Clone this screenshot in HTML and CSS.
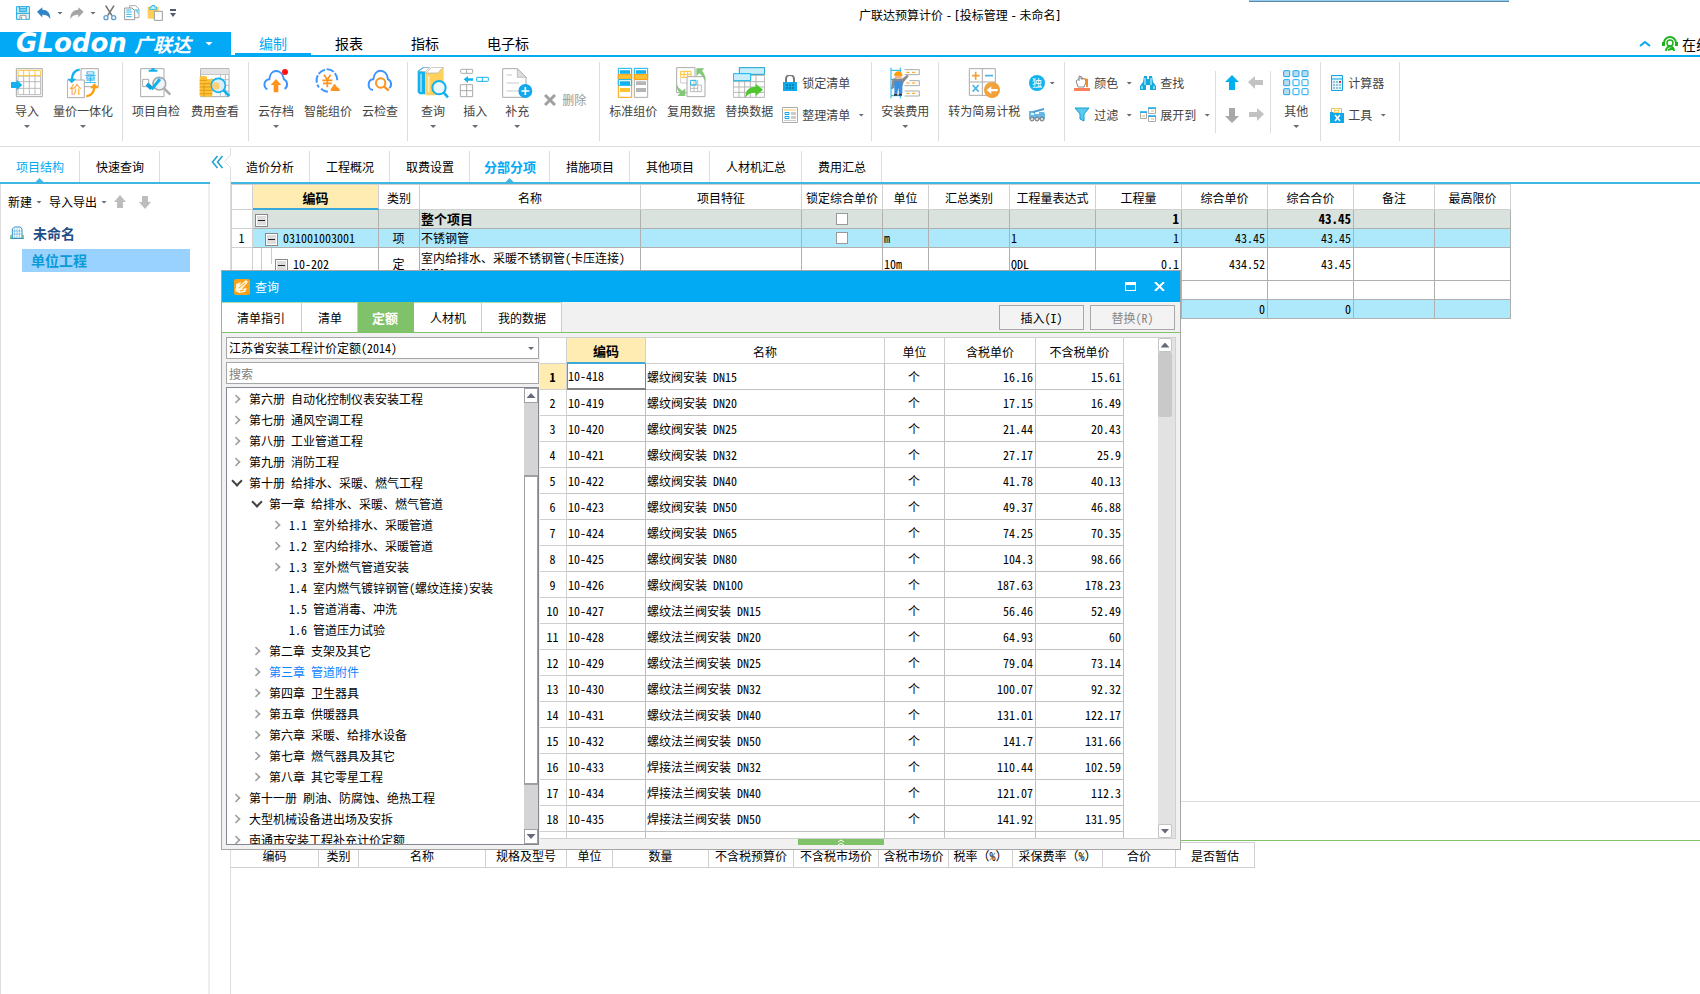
FILE: index.html
```html
<!DOCTYPE html>
<html lang="zh-CN">
<head>
<meta charset="utf-8">
<title>广联达预算计价 - [投标管理 - 未命名]</title>
<link rel="stylesheet" href="styles.css">
</head>
<body>
<div class="app">
<header class="titlebar">
  <div class="quick">
    <button aria-label="保存"><svg width="14" height="14" viewBox="48 18 42 42"><path d="M50 20h38v38H50z" fill="#e4f6fd" stroke="#14a5dd" stroke-width="3"/><path d="M58 20v15h22V20M60 25h18M60 30h18" fill="none" stroke="#14a5dd" stroke-width="3"/><path d="M50 40h38" stroke="#14a5dd" stroke-width="3"/><path d="M60 58V46h18v12M65 50v8" fill="#fff" stroke="#999" stroke-width="3"/></svg></button>
    <button aria-label="撤销" class="has-caret"><svg width="14" height="13" viewBox="114 16 42 38"><path d="M114 30l16-14v8c14 0 24 8 24 28-6-10-12-13-24-13v8z" fill="#2e86c8"/></svg><i class="caret"></i></button>
    <button aria-label="重做" class="has-caret"><svg width="14" height="13" viewBox="211 16 42 38"><path d="M252 30l-16-14v8c-14 0-24 8-24 28 6-10 12-13 24-13v8z" fill="#a5a5a5"/></svg><i class="caret"></i></button>
    <button aria-label="剪切"><svg width="14" height="16" viewBox="305 15 42 48"><path d="M313 17l19 30M338 17l-19 30" stroke="#777" stroke-width="5"/><circle cx="314" cy="53" r="6" fill="none" stroke="#5f9ccc" stroke-width="4"/><circle cx="337" cy="53" r="6" fill="none" stroke="#5f9ccc" stroke-width="4"/></svg></button>
    <button aria-label="复制"><svg width="16" height="16" viewBox="374 15 48 48"><path d="M391 24v-7h18l10 10v26h-14" fill="#fff" stroke="#aaa" stroke-width="3"/><path d="M376 24h22l8 8v27h-30z" fill="#fff" stroke="#999" stroke-width="3"/><path d="M381 30h14M381 36h16M381 43h16M381 50h16" stroke="#29b6ea" stroke-width="3"/><path d="M404 27h14v18z" fill="#7fd4f2"/></svg></button>
    <button aria-label="粘贴"><svg width="16" height="16" viewBox="442 15 48 48"><path d="M444 20h33v36h-33z" fill="#ffcf5a"/><path d="M451 28v-7h6v-5h7v5h6v7z" fill="#dff5fd" stroke="#29b6ea" stroke-width="3"/><path d="M464 34h24v27h-24z" fill="#fff" stroke="#999" stroke-width="3"/></svg></button>
    <button aria-label="自定义"><svg width="6" height="8" viewBox="0 0 6 8"><path d="M0 0h6v2H0zM0 4h6L3 8z" fill="#555a6e"/></svg></button>
  </div>
  <div class="window-title">广联达预算计价 - [投标管理 - 未命名]</div>
  <div class="drag-tab"></div>
</header>
<nav class="menubar">
  <button class="brand"><span class="brand-en">GLodon</span><span class="brand-cn">广联达</span><i class="caret caret-white"></i></button>
  <a href="#" class="menu active">编制</a><a href="#" class="menu">报表</a><a href="#" class="menu">指标</a><a href="#" class="menu wide">电子标</a>
  <div class="menu-end">
    <svg width="12" height="7" viewBox="0 0 12 7"><path d="M1 6l5-4 5 4" fill="none" stroke="#0aa6ee" stroke-width="2"/></svg>
    <svg width="16" height="16" viewBox="0 0 16 16" fill="none" stroke="#1db31d"><path d="M2 10V7a6 6 0 0 1 12 0v3" stroke-width="2"/><circle cx="8" cy="7" r="3" stroke-width="1.5"/><path d="M1 6v4M15 6v4" stroke-width="2"/><path d="M4 15c0-6 8-6 8 0M6 14l6-2" stroke-width="2"/></svg>
    <span>在线</span>
  </div>
</nav>

<div class="ribbon">
  <div class="group g-first">
    <button class="big"><svg width="32" height="32" viewBox="33 201 96 96"><path d="M49 206h78v84H49z" fill="#fff" stroke="#aaa" stroke-width="3"/><path d="M54 228h68v56H54zM54 245h68M54 265h68M71 228v56M88 228v56M105 228v56" fill="none" stroke="#bbb" stroke-width="3"/><path d="M54 211h68v16H54zM71 211v16M88 211v16M105 211v16" fill="none" stroke="#ffc53d" stroke-width="3"/><path d="M33 246h17v-7l17 16-17 16v-7H33z" fill="#12b2ee"/></svg><span>导入</span><i class="caret"></i></button>
    <button class="big"><svg width="32" height="32" viewBox="201 201 96 96"><path d="M243 206h52v54h-52z" fill="#fff" stroke="#aaa" stroke-width="3"/><path d="M202 240h51v53h-51z" fill="#fff" stroke="#aaa" stroke-width="3"/><text x="253" y="246" font-size="36" fill="#12b2ee" font-family="Noto Sans CJK SC">量</text><text x="209" y="281" font-size="36" fill="#ff9d0a" font-family="Noto Sans CJK SC">价</text><path d="M239 209c-16 2-22 12-23 28" fill="none" stroke="#12b2ee" stroke-width="7"/><path d="M202 236h27l-14 14z" fill="#12b2ee"/><path d="M259 289c18-3 23-13 24-27" fill="none" stroke="#ff9d0a" stroke-width="7"/><path d="M270 265h27l-14-15z" fill="#ff9d0a"/></svg><span>量价一体化</span><i class="caret"></i></button>
  </div>
  <div class="group g-check">
    <button class="big"><svg width="32" height="32" viewBox="419 201 96 96"><path d="M421 206h70v84h-70z" fill="#fff" stroke="#aaa" stroke-width="3"/><path d="M445 215v-6h7c2-7 10-7 12 0h7v6z" fill="#12b2ee"/><path d="M427 238h18v22h-18z" fill="none" stroke="#aaa" stroke-width="3"/><circle cx="477" cy="251" r="19" fill="#eef5fa" stroke="#aaa" stroke-width="5"/><path d="M492 266l18 18" stroke="#aaa" stroke-width="7"/><path d="M440 252l14 14" stroke="#0f9edb" stroke-width="12"/><path d="M454 268l25-31" stroke="#12b2ee" stroke-width="9"/></svg><span>项目自检</span></button>
    <button class="big"><svg width="32" height="32" viewBox="596 201 96 96"><path d="M601 206h85v84h-85z" fill="#fff" stroke="#aaa" stroke-width="3"/><path d="M602 208h83v13h-83z" fill="#e3e3e3"/><path d="M601 223h85M601 239h85M601 256h85M601 273h85M660 223v67M675 223v67" stroke="#bbb" stroke-width="3"/><path d="M598 230l11-3 11 3v10l16-5v53l-14 3-24-4z" fill="#ffc233"/><path d="M598 241h22M598 251h38M598 261h38M598 271h38M598 281h38M611 253v36" stroke="#e09a18" stroke-width="3"/><circle cx="654" cy="256" r="21" fill="#d9f0fa" stroke="#12b2ee" stroke-width="5"/><circle cx="647" cy="258" r="11" fill="#ffcf76"/><path d="M669 270l18 18" stroke="#12b2ee" stroke-width="8"/></svg><span>费用查看</span></button>
  </div>
  <div class="group g-cloud">
    <button class="big"><svg width="32" height="32" viewBox="780 195 96 96"><path d="M802 262c-14-8-10-29 6-30 2-33 38-33 44 0 12 5 12 23 2 29" fill="none" stroke="#3f95ff" stroke-width="6"/><path d="M828 231l16 18h-9v22h-14v-22h-9z" fill="#ff931e"/><circle cx="855" cy="210" r="9" fill="#f11"/></svg><span>云存档</span><i class="caret"></i></button>
    <button class="big"><svg width="32" height="32" viewBox="936 195 96 96"><path d="M975 203a33 33 0 0 0-18 53M980 202c20 0 31 14 32 33M963 260c7 6 13 9 21 9" fill="none" stroke="#3f95ff" stroke-width="6" stroke-dasharray="23 5"/><path d="M972 218l10 15 10-15M982 231v25M967 235h30M969 244h26" fill="none" stroke="#ff931e" stroke-width="5"/><path d="M992 267c0-11 7-10 9-20h5c2 10 14 10 14 20z" fill="#ff931e"/></svg><span>智能组价</span></button>
    <button class="big"><svg width="32" height="32" viewBox="1092 195 96 96"><path d="M1119 264c-18-1-17-31 1-32 3-35 41-34 44 0 11 4 12 20 4 26" fill="none" stroke="#3f95ff" stroke-width="6"/><circle cx="1142" cy="243" r="14" fill="none" stroke="#ff931e" stroke-width="6"/><path d="M1152 253l14 13" stroke="#ff931e" stroke-width="7"/></svg><span>云检查</span></button>
  </div>
  <div class="group g-query">
    <button class="big"><svg width="32" height="32" viewBox="52 201 96 96"><path d="M54 213l15-11h20l-12 11v70H60l-6-6z" fill="#12b2ee"/><path d="M64 221v55" stroke="#bfeafa" stroke-width="4"/><path d="M78 219l19-17h35v74l-26 10H78z" fill="#ffd05c"/><path d="M79 219l17-17h35l-17 17zM58 214l14-11h18l-13 12z" fill="#fff" stroke="#aaa" stroke-width="2"/><path d="M87 227v50" stroke="#fff0c0" stroke-width="5"/><circle cx="118" cy="263" r="20" fill="#edf7fb" stroke="#12b2ee" stroke-width="6"/><path d="M132 278l13 14" stroke="#12b2ee" stroke-width="8"/></svg><span>查询</span><i class="caret"></i></button>
    <button class="big"><svg width="32" height="32" viewBox="180 201 96 96"><rect x="185" y="208" width="36" height="12" rx="2" fill="none" stroke="#aaa" stroke-width="3"/><path d="M203 208v12M184 254h37v36h-37zM184 272h37M203 254v36" fill="none" stroke="#aaa" stroke-width="3"/><path d="M194 238l13-10v7h15v7h-15v7z" fill="#12b2ee"/><rect x="233" y="232" width="35" height="12" rx="2" fill="none" stroke="#12b2ee" stroke-width="3"/><path d="M250 232v12" stroke="#12b2ee" stroke-width="3"/></svg><span>插入</span><i class="caret"></i></button>
    <button class="big"><svg width="32" height="32" viewBox="302 201 96 96"><path d="M307 206h44l26 26v60h-70z" fill="#fff" stroke="#aaa" stroke-width="3"/><path d="M351 206v26h26z" fill="#ddd" stroke="#aaa" stroke-width="2"/><path d="M318 225h17M318 249h38M318 273h36" stroke="#ddd" stroke-width="5"/><circle cx="375" cy="273" r="21" fill="#12a8ee"/><path d="M363 273h24M375 261v24" stroke="#fff" stroke-width="5"/></svg><span>补充</span><i class="caret"></i></button>
    <button class="small disabled" disabled><svg width="12" height="12" viewBox="0 0 12 12"><path d="M1 1l10 10M11 1L1 11" stroke="#a0a0a0" stroke-width="3"/></svg><span>删除</span></button>
  </div>
  <div class="group g-data">
    <button class="big"><svg width="32" height="32" viewBox="651 201 96 96"><g fill="#fff" stroke-width="3"><path d="M655 205h40v32h-40z" stroke="#12b2ee"/><path d="M703 205h40v32h-40z" stroke="#12b2ee"/><path d="M655 239h40v53h-40z" stroke="#ff9d0a"/><path d="M703 239h40v53h-40z" stroke="#aaa"/><path d="M655 223h40v15h-40zM703 223h40v15h-40z" fill="#ffc233" stroke="#ff9d0a"/><path d="M655 239h40v17h-40z" stroke="#12b2ee"/></g><path d="M660 211h30v10h-30zM708 211h30v10h-30zM660 244h30v11h-30z" fill="#12b2ee"/><path d="M660 264h30v12h-30z" fill="#ffc233"/><path d="M708 244h30v11h-30zM708 264h30v12h-30z" fill="#b5b5b5"/></svg><span>标准组价</span></button>
    <button class="big"><svg width="32" height="32" viewBox="821 201 96 96"><path d="M826 203h55v75h-55z" fill="#fff" stroke="#aaa" stroke-width="3"/><path d="M838 214h31v18h-31zM848 214v18M859 214v18M838 223h31" fill="none" stroke="#ffc233" stroke-width="3"/><path d="M838 235v14h20" fill="none" stroke="#ccc" stroke-width="3"/><path d="M857 230h54v60h-54z" fill="#fff" stroke="#aaa" stroke-width="3"/><path d="M867 255h33v20h-33zM878 240v35M889 240v35M889 265h-22" fill="none" stroke="#bbb" stroke-width="3"/><path d="M868 241h16v14h-16z" fill="none" stroke="#12b2ee" stroke-width="3"/><path d="M885 205h24l-7 7c9 9 10 22 10 34-5-14-10-19-18-26l-9 9z" fill="#85c77a"/><path d="M852 288h-24l8-8c-8-8-11-18-11-30 4 11 9 17 18 22l9-7z" fill="#85c77a"/></svg><span>复用数据</span></button>
    <button class="big"><svg width="32" height="32" viewBox="999 201 96 96"><path d="M1000 226h94v66h-94zM1000 245h94M1000 261h94M1000 277h94M1017 226v66M1034 226v66M1051 226v66M1068 226v66" fill="#fff" stroke="#b5b5b5" stroke-width="3"/><path d="M1018 203h76v20h-76z" fill="#c8eefb" stroke="#12a0cc" stroke-width="3"/><path d="M1000 221h52v21h-52z" fill="#c8eefb" stroke="#12b2ee" stroke-width="3"/><path d="M1036 293c0-25 14-33 31-33v-9l22 18-22 19v-10c-15 0-23 3-31 15z" fill="#4fc52e"/></svg><span>替换数据</span></button>
    <div class="stack">
      <button class="small"><svg width="16" height="16" viewBox="0 0 16 16"><path d="M4 7V4a4 4 0 0 1 8 0v3" fill="none" stroke="#777" stroke-width="2"/><path d="M1 7h14v9H1z" fill="#12a8ee"/><path d="M4 10h8M4 13h8" stroke="#066" stroke-dasharray="2 1"/></svg><span>锁定清单</span></button>
      <button class="small"><svg width="16" height="16" viewBox="0 0 16 16"><path d="M.5.5h15v15H.5z" fill="#fff" stroke="#aaa"/><path d="M2 3h12" stroke="#ffe3ad" stroke-width="2"/><path d="M3 5.500h4v2H3zM3 9.500h4v2H3z" fill="#fff" stroke="#12a8ee"/><path d="M9 5h5v3H9zM9 9h5v3H9zM2 13h12v1H2z" fill="#ccc"/></svg><span>整理清单</span><i class="caret"></i></button>
    </div>
  </div>
  <div class="group">
    <button class="big"><svg width="32" height="32" viewBox="91 203 96 96"><path d="M97 205v92M125 205v92M97 213h28M97 240h28M97 264h28M97 289h28" stroke="#12b2ee" stroke-width="3"/><path d="M138 211h44v15h-44M152 244h30v15h-44M138 275h44v15h-44" fill="none" stroke="#aaa" stroke-width="3"/><path d="M143 219h10M160 219h10M143 251h10M160 251h10M143 282h10M160 282h10" stroke="#ff9d0a" stroke-width="3"/><path d="M101 240l9-5 6 5 14-2 16-12 4 5-15 18-4 12h-25l-3 9-5-1z" fill="#8b8b8b"/><path d="M107 246h24v37h-10l-2-18-3 18h-9z" fill="#3a8fe0"/><path d="M109 226h20v12h-20z" fill="#efb389"/><path d="M106 229c0-18 26-18 26 0z" fill="#ff9d0a"/><path d="M106 283h10v6h-10zM120 283h10v6h-10z" fill="#333"/></svg><span>安装费用</span><i class="caret"></i></button>
  </div>
  <div class="group g-tax">
    <button class="big"><svg width="32" height="32" viewBox="327 203 96 96"><path d="M331 208h78v80h-78zM370 208v80M331 248h78" fill="#fff" stroke="#aaa" stroke-width="3"/><path d="M339 229h23M350 217v24" stroke="#f2a035" stroke-width="5"/><path d="M378 229h24M341 257l18 20M359 257l-18 20" stroke="#4fb5e4" stroke-width="5"/><circle cx="399" cy="272" r="24" fill="#f2a23a"/><path d="M383 272l14-11v8h19v7h-19v8z" fill="#fff"/></svg><span>转为简易计税</span></button>
    <div class="stack">
      <button class="small tight"><svg width="16" height="16" viewBox="0 0 16 16"><circle cx="8" cy="8" r="8" fill="#12b2ee"/><text x="3" y="12" font-size="10" fill="#fff" font-family="Noto Sans CJK SC">独</text></svg><i class="caret"></i></button>
      <button class="small" aria-label="车辆"><svg width="16" height="14" viewBox="0 0 16 14"><path d="M0 3h6v3h4V4h5l1 2v5H0z" fill="#68b7e4"/><path d="M4 4L15 1" stroke="#4f9fd6" stroke-width="2"/><path d="M2 5h3v2H2z" fill="#dff1fb"/><g fill="#ddd" stroke="#6a7178" stroke-width="1"><circle cx="3" cy="11" r="2"/><circle cx="8" cy="11" r="2"/><circle cx="13" cy="11" r="2"/></g></svg></button>
    </div>
  </div>
  <div class="group g-tools">
    <div class="pairs">
      <button class="small"><svg width="16" height="16" viewBox="0 0 16 16"><path d="M0 13h16v3H0z" fill="#ff8058"/><path d="M2 6l4-3 5 1 1 3-2 5H4z" fill="#fff" stroke="#888"/><path d="M5 6V1l3 1v3" fill="none" stroke="#888"/><path d="M10 3l4 1v8h-2V7z" fill="#ed8b25"/></svg><span>颜色</span><i class="caret"></i></button>
      <button class="small"><svg width="16" height="16" viewBox="0 0 16 16"><path d="M4 1h3v3h2V1h3l1 6 3 4v4h-6v-5H6v5H0v-4l3-4z" fill="#16a7dc"/><path d="M5 3v7M11 3v7M2 11v3M14 11v3" stroke="#9ae3f5" stroke-width="1.500"/></svg><span>查找</span></button>
      <button class="small"><svg width="16" height="16" viewBox="0 0 16 16"><path d="M1 1h14l-5 6v7l-4-2V7z" fill="#5cc9f0" stroke="#159ed2"/></svg><span>过滤</span><i class="caret"></i></button>
      <button class="small"><svg width="16" height="16" viewBox="0 0 16 16"><path d="M.500 5.500h6v6h-6zM8.500 1.500h7v5h-7zM8.500 9.500h7v5h-7z" fill="#fff" stroke="#aaa"/><path d="M0 5h7M8 1h8M8 9h8" stroke="#12a8ee" stroke-width="1.500"/><path d="M2 9h3M11 4h3M11 12h3" stroke="#e1b36a"/></svg><span>展开到</span><i class="caret"></i></button>
    </div>
    <div class="arrows">
      <svg width="16" height="16" viewBox="0 0 16 16" fill="#00b0f0"><path d="M8 0l7 7h-4v8H5V7H1z"/></svg><svg width="16" height="16" viewBox="0 0 16 16" fill="#c2c2c2"><path d="M0 7l7-6v4h8v5H7v4z"/></svg>
      <svg width="16" height="16" viewBox="0 0 16 16" fill="#a8a8a8"><path d="M8 16l7-7h-4V1H5v8H1z"/></svg><svg width="16" height="16" viewBox="0 0 16 16" fill="#c2c2c2"><path d="M16 7L9 1v4H1v5h8v4z"/></svg>
    </div>
    <button class="big"><svg width="32" height="32" viewBox="62 203 96 96"><g fill="#b9dcef" stroke="#12a8ee" stroke-width="3"><rect x="73" y="214" width="18" height="18" rx="2"/><rect x="101" y="214" width="18" height="18" rx="2"/><rect x="128" y="214" width="18" height="18" rx="2"/><rect x="73" y="241" width="18" height="18" rx="2"/><rect x="73" y="268" width="18" height="18" rx="2"/><g fill="#fff"><rect x="101" y="241" width="18" height="18" rx="2"/><rect x="128" y="241" width="18" height="18" rx="2"/><rect x="101" y="268" width="18" height="18" rx="2"/><rect x="128" y="268" width="18" height="18" rx="2"/></g></g></svg><span>其他</span><i class="caret"></i></button>
  </div>
  <div class="group g-calc">
    <div class="stack">
      <button class="small"><svg width="14" height="16" viewBox="0 0 14 16"><path d="M1.500.500h11v15h-11z" fill="#e4f6fd" stroke="#14a5dd"/><path d="M1 4h12" stroke="#14a5dd"/><path d="M3 7h6M3 10h8M3 13h8" stroke="#4a93b8" stroke-dasharray="2 1"/><path d="M9 7h2" stroke="#e33" stroke-width="2"/></svg><span>计算器</span></button>
      <button class="small"><svg width="14" height="16" viewBox="0 0 14 16"><path d="M1.500 1.500h10v6h-10z" fill="#fff" stroke="#bbb"/><path d="M4 1h5v5H4z" fill="#ffd15f"/><path d="M5 2.500h3M5 4.500h3" stroke="#fff"/><path d="M0 5h3l1 1h10v10H0z" fill="#14a8e8"/><path d="M5 8l5 6M10 8l-5 6" stroke="#fff" stroke-width="1.500"/></svg><span>工具</span><i class="caret"></i></button>
    </div>
  </div>
</div>

<main class="workspace">
  <aside class="sidebar">
    <div class="tabs side-tabs"><button class="tab active plain">项目结构</button><button class="tab">快速查询</button></div>
    <div class="side-body">
      <div class="side-tools"><button>新建<i class="caret"></i></button><button>导入导出<i class="caret"></i></button>
        <svg width="12" height="14" viewBox="0 0 12 14"><path d="M6 0l6 7H9v6H3V7H0z" fill="#bdbdbd"/></svg><svg width="12" height="14" viewBox="0 0 12 14"><path d="M6 14l6-7H9V1H3v6H0z" fill="#bdbdbd"/></svg></div>
      <div class="project"><svg width="14" height="14" viewBox="30 681 42 42"><path d="M37 690l6-6h18l5 6v28H37z" fill="#fff" stroke="#2d8fc9" stroke-width="3"/><path d="M44 688v27M51 688v27M58 688v27M38 696h28M38 705h28" stroke="#5fb0dc" stroke-width="2"/><path d="M30 718h42" stroke="#2d8fc9" stroke-width="3"/><path d="M33 708v11M69 708v11" stroke="#5db565" stroke-width="4"/></svg><span>未命名</span></div>
      <div class="unit">单位工程</div>
    </div>
  </aside>
  <button class="gutter" aria-label="收起"><svg width="21" height="37" viewBox="-1 0 21 37" fill="none"><path d="M6.500 9L1.500 15l5 6M11.500 9l-5 6 5 6" stroke="#1ba2d0" stroke-width="1.500"/><path d="M19.500 1v7l-6 6.500 6 6V37" stroke="#ddd"/></svg></button>
  <section class="content">
    <div class="tabs"><button class="tab">造价分析</button><button class="tab">工程概况</button><button class="tab">取费设置</button><button class="tab active">分部分项</button><button class="tab">措施项目</button><button class="tab">其他项目</button><button class="tab">人材机汇总</button><button class="tab">费用汇总</button></div>
    <div class="upper">
      <table class="grid bill">
        <colgroup><col style="width:21px"><col style="width:126px"><col style="width:41px"><col style="width:221px"><col style="width:161px"><col style="width:81px"><col style="width:46px"><col style="width:81px"><col style="width:86px"><col style="width:86px"><col style="width:86px"><col style="width:86px"><col style="width:81px"><col style="width:76px"></colgroup>
        <thead><tr><th></th><th class="picked">编码</th><th>类别</th><th>名称</th><th>项目特征</th><th>锁定综合单价</th><th>单位</th><th>汇总类别</th><th>工程量表达式</th><th>工程量</th><th>综合单价</th><th>综合合价</th><th>备注</th><th>最高限价</th></tr></thead>
        <tbody>
          <tr class="total"><td class="no"></td><td class="lv0"><button class="minus" aria-label="折叠"></button></td><td></td><td>整个项目</td><td></td><td class="mid"><input type="checkbox" aria-label="锁定综合单价"></td><td></td><td></td><td></td><td class="num">1</td><td></td><td class="num">43.45</td><td></td><td></td></tr>
          <tr class="sel"><td class="no">1</td><td class="lv1"><button class="minus" aria-label="折叠"></button>031001003001</td><td class="mid">项</td><td>不锈钢管</td><td></td><td class="mid"><input type="checkbox" aria-label="锁定综合单价"></td><td>m</td><td></td><td>1</td><td class="num">1</td><td class="num">43.45</td><td class="num">43.45</td><td></td><td></td></tr>
          <tr class="tall"><td class="no"></td><td class="lv2"><button class="minus" aria-label="折叠"></button>10-202</td><td class="mid">定</td><td><div class="wrap">室内给排水、采暖不锈钢管(卡压连接) DN50</div></td><td></td><td></td><td>10m</td><td></td><td>QDL</td><td class="num">0.1</td><td class="num">434.52</td><td class="num">43.45</td><td></td><td></td></tr>
          <tr><td class="no"></td><td></td><td></td><td></td><td></td><td></td><td></td><td></td><td></td><td></td><td></td><td></td><td></td><td></td></tr>
          <tr class="sel"><td class="no"></td><td></td><td></td><td></td><td></td><td></td><td></td><td></td><td></td><td></td><td class="num">0</td><td class="num">0</td><td></td><td></td></tr>
        </tbody>
      </table>
    </div>
    <div class="splitter"></div>
    <div class="lower">
      <table class="grid detail">
        <colgroup><col style="width:88px"><col style="width:40px"><col style="width:127px"><col style="width:81px"><col style="width:46px"><col style="width:96px"><col style="width:85px"><col style="width:85px"><col style="width:70px"><col style="width:64px"><col style="width:90px"><col style="width:73px"><col style="width:79px"></colgroup>
        <thead><tr><th>编码</th><th>类别</th><th>名称</th><th>规格及型号</th><th>单位</th><th>数量</th><th>不含税预算价</th><th>不含税市场价</th><th>含税市场价</th><th>税率（%）</th><th>采保费率（%）</th><th>合价</th><th>是否暂估</th></tr></thead>
      </table>
    </div>
  </section>
</main>

<div class="dialog" role="dialog" aria-label="查询">
  <div class="dialog-title">
    <svg width="16" height="16" viewBox="0 0 16 16"><rect width="16" height="16" rx="2" fill="#f9a11b"/><path d="M2 5l5-2-1 3 6-5 2 2-6 7 5-1-2 4-6 1-4-2 1-4z" fill="#fff3d4"/><path d="M5 9l6-5M6 12l4-1" stroke="#f9a11b"/></svg>
    <span>查询</span>
    <div class="dialog-ctl"><button aria-label="最大化"><svg width="11" height="9" viewBox="0 0 11 9"><path d="M0 0h11v9H0zM1 3v5h9V3z" fill="#fff" fill-rule="evenodd"/></svg></button><button aria-label="关闭"><svg width="11" height="9" viewBox="0 0 11 9"><path d="M1 0l9 9M10 0L1 9" stroke="#fff" stroke-width="2"/></svg></button></div>
  </div>
  <div class="dialog-tabs"><button>清单指引</button><button>清单</button><button class="on">定额</button><button>人材机</button><button>我的数据</button>
    <div class="actions"><button>插入(I)</button><button disabled>替换(R)</button></div></div>
  <div class="dialog-body">
    <div class="nav">
      <div class="library"><select aria-label="定额库"><option>江苏省安装工程计价定额(2014)</option></select><i class="caret"></i></div>
      <input class="search" type="text" placeholder="搜索" aria-label="搜索">
      <div class="tree">
        <ul>
          <li><p class="shut">第六册 自动化控制仪表安装工程</p></li>
          <li><p class="shut">第七册 通风空调工程</p></li>
          <li><p class="shut">第八册 工业管道工程</p></li>
          <li><p class="shut">第九册 消防工程</p></li>
          <li><p class="open">第十册 给排水、采暖、燃气工程</p>
            <ul>
              <li><p class="open">第一章 给排水、采暖、燃气管道</p>
                <ul>
                  <li><p class="shut">1.1 室外给排水、采暖管道</p></li>
                  <li><p class="shut">1.2 室内给排水、采暖管道</p></li>
                  <li><p class="shut">1.3 室外燃气管道安装</p></li>
                  <li><p>1.4 室内燃气镀锌钢管(螺纹连接)安装</p></li>
                  <li><p>1.5 管道消毒、冲洗</p></li>
                  <li><p>1.6 管道压力试验</p></li>
                </ul></li>
              <li><p class="shut">第二章 支架及其它</p></li>
              <li><p class="shut current">第三章 管道附件</p></li>
              <li><p class="shut">第四章 卫生器具</p></li>
              <li><p class="shut">第五章 供暖器具</p></li>
              <li><p class="shut">第六章 采暖、给排水设备</p></li>
              <li><p class="shut">第七章 燃气器具及其它</p></li>
              <li><p class="shut">第八章 其它零星工程</p></li>
            </ul></li>
          <li><p class="shut">第十一册 刷油、防腐蚀、绝热工程</p></li>
          <li><p class="shut">大型机械设备进出场及安拆</p></li>
          <li><p class="shut">南通市安装工程补充计价定额</p></li>
        </ul>
        <div class="bar"><button class="up" aria-label="向上"></button><div class="gap-a"></div><div class="thumb"></div><div class="gap-b"></div><button class="down" aria-label="向下"></button></div>
      </div>
    </div>
    <div class="results">
      <div class="result-scroll">
      <table class="grid quota">
        <colgroup><col style="width:27px"><col style="width:79px"><col style="width:239px"><col style="width:60px"><col style="width:91px"><col style="width:88px"></colgroup>
        <thead><tr><th></th><th class="picked">编码</th><th>名称</th><th>单位</th><th>含税单价</th><th>不含税单价</th></tr></thead>
        <tbody>
          <tr class="cur"><td class="no">1</td><td class="focus">10-418</td><td>螺纹阀安装 DN15</td><td class="mid">个</td><td class="num">16.16</td><td class="num">15.61</td></tr>
          <tr><td class="no">2</td><td>10-419</td><td>螺纹阀安装 DN20</td><td class="mid">个</td><td class="num">17.15</td><td class="num">16.49</td></tr>
          <tr><td class="no">3</td><td>10-420</td><td>螺纹阀安装 DN25</td><td class="mid">个</td><td class="num">21.44</td><td class="num">20.43</td></tr>
          <tr><td class="no">4</td><td>10-421</td><td>螺纹阀安装 DN32</td><td class="mid">个</td><td class="num">27.17</td><td class="num">25.9</td></tr>
          <tr><td class="no">5</td><td>10-422</td><td>螺纹阀安装 DN40</td><td class="mid">个</td><td class="num">41.78</td><td class="num">40.13</td></tr>
          <tr><td class="no">6</td><td>10-423</td><td>螺纹阀安装 DN50</td><td class="mid">个</td><td class="num">49.37</td><td class="num">46.88</td></tr>
          <tr><td class="no">7</td><td>10-424</td><td>螺纹阀安装 DN65</td><td class="mid">个</td><td class="num">74.25</td><td class="num">70.35</td></tr>
          <tr><td class="no">8</td><td>10-425</td><td>螺纹阀安装 DN80</td><td class="mid">个</td><td class="num">104.3</td><td class="num">98.66</td></tr>
          <tr><td class="no">9</td><td>10-426</td><td>螺纹阀安装 DN100</td><td class="mid">个</td><td class="num">187.63</td><td class="num">178.23</td></tr>
          <tr><td class="no">10</td><td>10-427</td><td>螺纹法兰阀安装 DN15</td><td class="mid">个</td><td class="num">56.46</td><td class="num">52.49</td></tr>
          <tr><td class="no">11</td><td>10-428</td><td>螺纹法兰阀安装 DN20</td><td class="mid">个</td><td class="num">64.93</td><td class="num">60</td></tr>
          <tr><td class="no">12</td><td>10-429</td><td>螺纹法兰阀安装 DN25</td><td class="mid">个</td><td class="num">79.04</td><td class="num">73.14</td></tr>
          <tr><td class="no">13</td><td>10-430</td><td>螺纹法兰阀安装 DN32</td><td class="mid">个</td><td class="num">100.07</td><td class="num">92.32</td></tr>
          <tr><td class="no">14</td><td>10-431</td><td>螺纹法兰阀安装 DN40</td><td class="mid">个</td><td class="num">131.01</td><td class="num">122.17</td></tr>
          <tr><td class="no">15</td><td>10-432</td><td>螺纹法兰阀安装 DN50</td><td class="mid">个</td><td class="num">141.7</td><td class="num">131.66</td></tr>
          <tr><td class="no">16</td><td>10-433</td><td>焊接法兰阀安装 DN32</td><td class="mid">个</td><td class="num">110.44</td><td class="num">102.59</td></tr>
          <tr><td class="no">17</td><td>10-434</td><td>焊接法兰阀安装 DN40</td><td class="mid">个</td><td class="num">121.07</td><td class="num">112.3</td></tr>
          <tr><td class="no">18</td><td>10-435</td><td>焊接法兰阀安装 DN50</td><td class="mid">个</td><td class="num">141.92</td><td class="num">131.95</td></tr>
          <tr><td class="no"></td><td></td><td></td><td></td><td></td><td></td></tr>
        </tbody>
      </table>
      <div class="bar bar-right"><button class="up" aria-label="向上"></button><div class="thumb"></div><div class="gap-b"></div><button class="down" aria-label="向下"></button></div>
      </div>
      <button class="handle" aria-label="展开"><svg width="8" height="6" viewBox="0 0 8 6"><path d="M1 3l3-2 3 2M1 6l3-2 3 2" fill="none" stroke="#fff"/></svg></button>
    </div>
  </div>
</div>
</div>
</body>
</html>
```
FILE: styles.css
```css
* { box-sizing: border-box; }
body { margin: 0; background: #fff; color: #000; font: 12px/16px "Noto Sans CJK SC", sans-serif; }
button { margin: 0; padding: 0; border: 0; background: none; font: inherit; color: inherit; }
a { color: inherit; text-decoration: none; }
svg { display: block; flex: none; }
p, ul { margin: 0; padding: 0; list-style: none; }

.app { position: relative; display: flex; flex-direction: column; height: 100vh; overflow: hidden; }
.caret { flex: none; width: 6px; height: 3px; background: #666b78; clip-path: polygon(0 0, 100% 0, 50% 100%); }
.caret-white { width: 8px; height: 4px; background: #fff; }

/* title bar */
.titlebar { position: relative; height: 32px; flex: none; display: flex; align-items: center; }
.quick { display: flex; align-items: center; gap: 7px; padding: 0 0 6px 16px; }
.quick .has-caret { display: flex; align-items: center; gap: 6px; }
.window-title { position: absolute; left: 859px; top: 8px; white-space: nowrap; font-family: "DejaVu Sans", "Noto Sans CJK SC", sans-serif; }
.drag-tab { position: absolute; left: 1249px; top: 0; width: 260px; height: 2px; background: #8fcdf3; border-bottom: 1px solid #5f87a5; }

/* menu */
.menubar { height: 25px; flex: none; display: flex; border-bottom: 2px solid #03a9f4; font-size: 14px; }
.brand { width: 231px; background: #03a9f4; color: #fff; display: flex; align-items: center; padding-left: 16px; gap: 2px; font-style: italic; font-weight: bold; line-height: 23px; }
.brand-en { width: 116px; text-align: left; font-family: "DejaVu Sans", sans-serif; font-size: 26px; }
.brand-cn { font-size: 19px; margin-right: 12px; }
.menu { width: 76px; line-height: 23px; text-align: center; }
.brand + .menu { margin-left: 4px; }
.menu.wide { width: 90px; }
.menu.active { color: #03a9f4; border-bottom: 2px solid #03a9f4; line-height: 22px; }
.menu-end { margin-left: auto; display: flex; align-items: center; gap: 4px; width: 61px; white-space: nowrap; }
.menu-end svg:first-child { margin-right: 7px; }

/* ribbon */
.ribbon { flex: none; display: flex; padding: 5px 0; border-bottom: 1px solid #ddd; color: #444; }
.group { display: flex; align-items: flex-start; gap: 10px; height: 79px; padding: 0 9px; border-right: 1px solid #ddd; }
.g-first { padding-left: 15px; gap: 14px; }
.g-check { gap: 11px; }
.g-query { padding: 0 13px; gap: 18px; }
.g-query .small { margin: 30px 0 0 -3px; }
.g-tools { gap: 0; padding-right: 12px; }
.big { display: flex; flex-direction: column; align-items: center; padding-top: 5px; }
.big svg { margin: 0 -4px; }
.big span { margin: 4px 0 6px; white-space: nowrap; }
.small { display: flex; align-items: center; height: 16px; gap: 4px; white-space: nowrap; }
.small span + .caret { margin-left: 4px; }
.small.disabled { color: #999; gap: 6px; }
.stack { display: grid; row-gap: 16px; padding-top: 13px; }
.g-data { padding-right: 7px; }
.g-data .stack { margin-left: -1px; }
.g-tax .stack { margin-left: -1px; }
.pairs { display: grid; grid-template-columns: 66px 69px; row-gap: 16px; padding-top: 13px; }
.arrows { display: grid; grid-template-columns: 24px 16px; row-gap: 16px; margin: 9px 13px 0 6px; padding: 4px 6px 10px 8px; border: solid #ddd; border-width: 0 1px; }
.g-calc { padding-right: 13px; }

/* workspace */
.workspace { flex: 1; display: flex; min-height: 0; }
.sidebar { width: 210px; flex: none; display: flex; flex-direction: column; }
.tabs { height: 37px; flex: none; display: flex; padding-top: 4px; border-bottom: 2px solid #3fb5e2; }
.tab { position: relative; padding: 0 15px 0 16px; border-right: 1px solid #ddd; line-height: 30px; white-space: nowrap; }
.tab:first-child { padding-left: 15px; }
.tab.active { color: #03a9f4; font-weight: bold; font-size: 13px; padding: 0 13px 0 14px; }
.tab.active.plain { font-weight: normal; font-size: 12px; padding: 0 15px 0 16px; }
.tab.active::after { content: ""; position: absolute; bottom: 0; left: 50%; margin-left: -4px; width: 8px; height: 4px; background: #3fb5e2; clip-path: polygon(50% 0, 100% 100%, 0 100%); }
.side-body { flex: 1; border-left: 1px solid #ddd; border-right: 2px solid #eee; }
.side-tools { display: flex; align-items: center; gap: 7px; padding: 10px 0 0 7px; }
.side-tools button { display: flex; align-items: center; gap: 4px; }
.side-tools svg { margin-right: 6px; }
.project { display: flex; align-items: center; gap: 9px; padding: 14px 0 0 9px; color: #1f4e89; font-size: 14px; line-height: 18px; font-weight: bold; }
.unit { margin: 7px 18px 0 21px; padding-left: 9px; height: 23px; background: #99d1ff; color: #0a9ad6; font-size: 14px; font-weight: bold; line-height: 22px; }
.gutter { width: 21px; flex: none; display: flex; align-items: flex-start; position: relative; }
.gutter::after { content: ""; position: absolute; right: 0; top: 37px; bottom: 0; width: 1px; background: #ddd; }
.content { flex: 1; min-width: 0; display: flex; flex-direction: column; }
.upper { flex: 1; min-height: 0; }
.splitter { height: 40px; flex: none; border-top: 1px solid #ddd; border-bottom: 1px solid #80c269; }
.lower { height: 153px; flex: none; padding-top: 1px; }

/* tables */
.grid { table-layout: fixed; width: min-content; border-collapse: separate; border-spacing: 0; font-family: "Noto Sans Mono CJK SC", "Noto Sans CJK SC", monospace; }
.grid th, .grid td { padding: 0 2px 0 1px; border: solid #b0b0b0; border-width: 0 1px 1px 0; white-space: nowrap; overflow: hidden; }
.grid th { padding: 2px 0 0; border-color: #d0d0d0; font-weight: normal; text-align: center; background: #fff; }
.grid .picked { background: #ffecb3; border-bottom: 2px solid #3aa9da; font-weight: bold; font-size: 13px; }
.grid .num { text-align: right; }
.grid .mid, .grid .no { text-align: center; }
.grid .no { border-color: #d0d0d0; background: #fff; font-weight: normal; }
.bill { border-top: 1px solid #d0d0d0; border-left: 1px solid #d0d0d0; }
.bill th { height: 25px; }
.bill td { height: 19px; line-height: 16px; }
.bill .tall td { height: 33px; }
.bill .total td { background: #d9e2dd; font-size: 13px; font-weight: bold; }
.bill .sel td { background: #aee8fb; }
.bill tr .no.no { background: #fff; font-weight: normal; font-size: 12px; }
.wrap { height: 32px; padding-top: 2px; line-height: 15px; white-space: normal; overflow: hidden; }
.bill input { appearance: none; display: block; width: 12px; height: 12px; margin: 0 auto; border: 1px solid #999; background: #fff; }
.minus { display: inline-block; vertical-align: middle; width: 13px; height: 13px; margin-right: 5px; border: 1px solid #888; box-shadow: inset 0 0 0 1px #fff; background: linear-gradient(#222, #222) center / 7px 1px no-repeat, #ddd; }
.bill .lv0 { padding-left: 2px; }
.bill .lv1 { padding-left: 12px; background: linear-gradient(#ccc, #ccc) 8px 0 / 1px 100% no-repeat, #aee8fb; }
.bill .lv2 { padding-left: 22px; background: linear-gradient(#ccc, #ccc) 8px 0 / 1px 100% no-repeat, linear-gradient(#ccc, #ccc) 18px 0 / 1px 50% no-repeat; }
.detail { border-top: 1px solid #d0d0d0; }
.detail th { height: 25px; }

/* dialog */
.dialog { position: absolute; left: 221px; top: 270px; width: 960px; height: 580px; display: flex; flex-direction: column; background: #f1f1f1; border: 1px solid #a6a6a6; }
.dialog-title { height: 31px; flex: none; display: flex; align-items: center; gap: 5px; padding: 0 15px 0 12px; background: #02a9f3; color: #fff; }
.dialog-ctl { margin-left: auto; display: flex; gap: 18px; }
.dialog-tabs { height: 31px; flex: none; display: flex; border-bottom: 1px solid #80c269; }
.dialog-tabs > button { padding: 0 15px 0 16px; background: #fff; border: solid #b3dfa3; border-width: 1px 1px 0 0; }
.dialog-tabs > button:first-child { padding: 0 16px 0 15px; }
.dialog-tabs > .on { background: #80c269; border-color: #80c269; color: #fff; font-weight: bold; font-size: 13px; padding: 0 15px 0 14px; }
.actions { margin-left: auto; display: flex; gap: 6px; padding: 3px 5px 0 0; }
.actions button { width: 85px; height: 25px; border: 1px solid #a8a8a8; background: #f3f3f3; font-family: "Noto Sans Mono CJK SC", "Noto Sans CJK SC", monospace; }
.actions button:disabled { color: #888; }
.dialog-body { flex: 1; min-height: 0; display: flex; padding: 4px 4px 0; }
.nav { width: 313px; flex: none; display: flex; flex-direction: column; gap: 3px; padding-bottom: 4px; }
.library { position: relative; }
.library .caret { position: absolute; right: 5px; top: 10px; }
.library select, .search { appearance: none; display: block; width: 100%; height: 22px; padding: 0 2px; border: 1px solid #a6a6a6; border-radius: 0; background: #fff; color: #000; font: 12px/20px "Noto Sans Mono CJK SC", "Noto Sans CJK SC", monospace; }
.search::placeholder { color: #808080; }
.tree { flex: 1; min-height: 0; display: flex; overflow: hidden; border: 1px solid #828790; background: #fff; font-family: "Noto Sans Mono CJK SC", "Noto Sans CJK SC", monospace; }
.tree > ul { flex: 1; }
.tree ul ul { padding-left: 20px; }
.tree p { position: relative; height: 21px; padding-left: 22px; line-height: 21px; white-space: nowrap; }
.tree .current { color: #0a84ff; }
.tree .shut::before, .tree .open::before { content: ""; position: absolute; left: 5px; top: 7px; width: 6px; height: 6px; border: solid #a0a0a0; border-width: 2px 2px 0 0; transform: rotate(45deg) scale(.8); }
.tree .open::before { left: 6px; top: 5px; border-color: #444; transform: rotate(135deg); }
.bar { width: 14px; flex: none; display: flex; flex-direction: column; background: #d4d4d4; }
.bar button { height: 15px; flex: none; border: 1px solid #a0a0a0; background: #fff; display: grid; place-items: center; }
.bar button::after { content: ""; width: 9px; height: 5px; background: #666b78; clip-path: polygon(50% 0, 100% 100%, 0 100%); }
.bar .down::after { clip-path: polygon(0 0, 100% 0, 50% 100%); }
.bar .gap-a { flex: 73; }
.bar .thumb { flex: 310; border: 1px solid #a0a0a0; border-width: 2px 1px; background: #fff; }
.bar .gap-b { flex: 45; }
.results { flex: 1; min-width: 0; display: flex; flex-direction: column; align-items: flex-start; margin-left: 1px; }
.result-scroll { width: 100%; height: 502px; flex: none; display: flex; overflow: hidden; background: #fff; border: solid #d0d0d0; border-width: 1px 1px 1px 0; }
.bar-right { margin-left: auto; width: 17px; padding-right: 3px; background: #e2e2e2; }
.bar-right button { height: 14px; border-color: #c4c4c4; border-radius: 2px; }
.bar-right .thumb { flex: 65; border: 0; border-radius: 2px; background: #c9c9c9; }
.bar-right .gap-b { flex: 407; }
.quota th { height: 26px; }
.quota td { height: 26px; border-color: #c0c0c0; }
.quota .focus { border: solid #808080; border-width: 0 1px 2px 0; box-shadow: inset 1px 0 #3aa9da; }
.quota .cur .no { background: #ffecb3; font-weight: bold; }
.handle { width: 86px; height: 6px; margin: 0 0 0 258px; background: #80c269; display: flex; justify-content: center; }
```
